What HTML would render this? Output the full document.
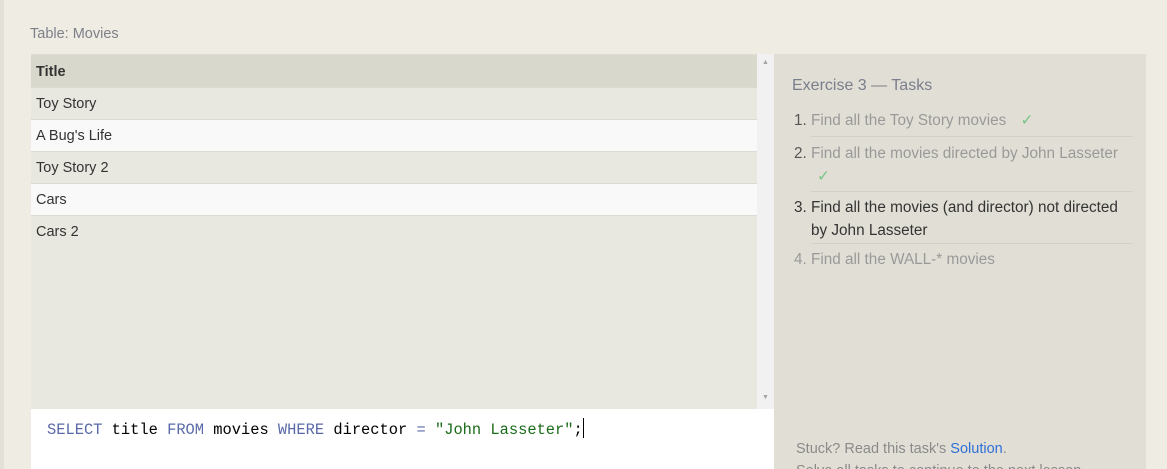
<!DOCTYPE html>
<html style="overflow:hidden;height:469px"><head><style>
*{margin:0;padding:0;box-sizing:border-box}
body{width:1167px;height:469px;overflow:hidden;background:#efece4;font-family:"Liberation Sans",sans-serif;position:relative}
.strip{position:absolute;left:0;top:0;width:4px;height:469px;background:#e3e0da}
.lbl{position:absolute;left:30px;top:26px;font-size:14.5px;color:#7d8088}
.tbl{position:absolute;left:31px;top:54px;width:726px;height:355px;background:#e9e8e0;border-top:1px solid #dedcd2}
.row{height:32px;line-height:32px;padding-left:5px;font-size:14.5px;color:#333;border-bottom:1px solid #dcdbd3}
.hd{background:#d9d8cc;font-weight:bold;color:#333;height:33px;line-height:35px}
.w{background:#f9f9f9}
.sb{position:absolute;left:757px;top:54px;width:17px;height:355px;background:#f1f1f1}
.sb span{position:absolute;left:5px;font-size:7px;color:#a3a3a3}
.ed{position:absolute;left:31px;top:409px;width:743px;height:60px;background:#fff}
.code{position:absolute;left:16px;top:9px;font-family:"Liberation Mono",monospace;font-size:15.4px;color:#000;white-space:pre}
.k{color:#5a6aa8}.s{color:#1a6b1a}
.cur{display:inline-block;width:1px;height:20px;background:#000;vertical-align:-4px}
.rp{position:absolute;left:774px;top:54px;width:372px;height:415px;background:#e1dfd5}
.h{position:absolute;left:18px;top:23px;font-size:16px;color:#7a7e8c}
ol{position:absolute;left:18px;top:55px;width:340px;list-style:none;font-size:15.3px}
li{position:relative;padding-left:19px;line-height:23px;color:#999;}
li .n{position:absolute;left:2px;color:#555}
li.sep{border-bottom:1px solid #d3d1c6;margin-left:19px;padding-left:0}
li.sep .n{left:-17px}
li.a{color:#333}
.ck{color:#7bc48a;margin-left:10px}
.foot{position:absolute;left:22px;top:384px;font-size:14.5px;color:#8a8a8a;line-height:22px}
.foot a{color:#2f6fd8;text-decoration:none}
</style></head><body>
<div class="strip"></div>
<div class="lbl">Table: Movies</div>
<div class="tbl">
<div class="row hd">Title</div>
<div class="row">Toy Story</div>
<div class="row w">A Bug's Life</div>
<div class="row">Toy Story 2</div>
<div class="row w">Cars</div>
<div class="row" style="border:0">Cars 2</div>
</div>
<div class="sb"><span style="top:5px">▲</span><span style="top:340px">▼</span></div>
<div class="ed"><div class="code"><span class="k">SELECT</span> title <span class="k">FROM</span> movies <span class="k">WHERE</span> director <span class="k">=</span> <span class="s">"John Lasseter"</span>;<span class="cur"></span></div></div>
<div class="rp">
<div class="h">Exercise 3 — Tasks</div>
<ol>
<li class="sep" style="padding:0 0 4px"><span class="n">1.</span>Find all the Toy Story movies <span class="ck">✓</span></li>
<li class="sep" style="padding:5px 0 3px"><span class="n" style="top:5px">2.</span>Find all the movies directed by John Lasseter<br><span class="ck" style="margin-left:6px">✓</span></li>
<li class="sep a" style="padding:4px 0 1px"><span class="n" style="top:4px;color:#333">3.</span>Find all the movies (and director) not directed by John Lasseter</li>
<li class="sep" style="border:0;padding-top:4px"><span class="n" style="top:4px;color:#999">4.</span>Find all the WALL-* movies</li>
</ol>
<div class="foot">Stuck? Read this task's <a>Solution</a>.<br>Solve all tasks to continue to the next lesson.</div>
</div>
</body></html>
